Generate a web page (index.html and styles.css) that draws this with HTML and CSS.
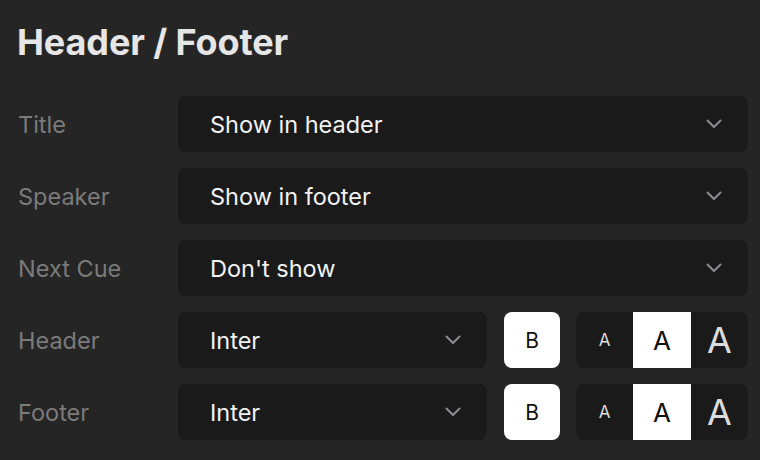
FILE: index.html
```html
<!DOCTYPE html>
<html>
<head>
<meta charset="utf-8">
<link rel="stylesheet" href="styles.css">
</head>
<body>
<div class="panel">
  <h1 class="title">Header / Footer</h1>
  <div class="rows">
    <div class="row">
      <div class="label">Title</div>
      <div class="select wide"><span>Show in header</span><svg class="chev" viewBox="0 0 16 10"><path d="M1.5 1.5 L8 8 L14.5 1.5"/></svg></div>
    </div>
    <div class="row">
      <div class="label">Speaker</div>
      <div class="select wide"><span>Show in footer</span><svg class="chev" viewBox="0 0 16 10"><path d="M1.5 1.5 L8 8 L14.5 1.5"/></svg></div>
    </div>
    <div class="row">
      <div class="label">Next Cue</div>
      <div class="select wide"><span>Don't show</span><svg class="chev" viewBox="0 0 16 10"><path d="M1.5 1.5 L8 8 L14.5 1.5"/></svg></div>
    </div>
    <div class="row">
      <div class="label">Header</div>
      <div class="controls">
        <div class="select font"><span>Inter</span><svg class="chev" viewBox="0 0 16 10"><path d="M1.5 1.5 L8 8 L14.5 1.5"/></svg></div>
        <div class="bold">B</div>
        <div class="sizes">
          <div class="size s">A</div>
          <div class="size m active">A</div>
          <div class="size l">A</div>
        </div>
      </div>
    </div>
    <div class="row">
      <div class="label">Footer</div>
      <div class="controls">
        <div class="select font"><span>Inter</span><svg class="chev" viewBox="0 0 16 10"><path d="M1.5 1.5 L8 8 L14.5 1.5"/></svg></div>
        <div class="bold">B</div>
        <div class="sizes">
          <div class="size s">A</div>
          <div class="size m active">A</div>
          <div class="size l">A</div>
        </div>
      </div>
    </div>
  </div>
</div>
</body>
</html>
```
FILE: styles.css
```css
html, body {
  margin: 0;
  padding: 0;
  background: #252525;
}
body {
  font-family: Inter, "Noto Sans", sans-serif;
  width: 760px;
  height: 460px;
  overflow: hidden;
}
.panel {
  padding: 20px 12px 0 17px;
}
.title {
  margin: 0 0 32px 0;
  font-size: 36px;
  font-weight: 700;
  letter-spacing: -0.1px;
  color: #e6e6e6;
  line-height: 44px;
}
.rows {
  display: flex;
  flex-direction: column;
  gap: 16px;
}
.row {
  display: grid;
  grid-template-columns: 161px 1fr;
  align-items: center;
  height: 56px;
}
.label {
  font-size: 23.5px;
  color: #7b7b7b;
  padding-left: 1px;
}
.select {
  height: 56px;
  background: #1a1a1a;
  border-radius: 8px;
  display: flex;
  align-items: center;
  justify-content: space-between;
  padding: 0 26px 0 32px;
  box-sizing: border-box;
  color: #f2f2f2;
  font-size: 23.5px;
}
.chev {
  width: 16px;
  height: 10px;
  fill: none;
  stroke: #8c8c98;
  stroke-width: 2;
  stroke-linecap: round;
  stroke-linejoin: round;
}
.controls {
  display: flex;
  align-items: center;
}
.font {
  width: 309px;
}
.bold {
  margin-left: 17px;
  width: 56px;
  height: 56px;
  background: #ffffff;
  border-radius: 8px;
  display: flex;
  align-items: center;
  justify-content: center;
  font-size: 21px;
  color: #111;
}
.sizes {
  margin-left: 16px;
  width: 172px;
  height: 56px;
  background: #1a1a1a;
  border-radius: 8px;
  display: flex;
  overflow: hidden;
}
.size {
  flex: 1;
  display: flex;
  align-items: center;
  justify-content: center;
  color: #dcdcdc;
}
.size.s { font-size: 17px; }
.size.m { font-size: 26px; }
.size.l { font-size: 36px; }
.size.active {
  background: #ffffff;
  color: #111;
}
```
